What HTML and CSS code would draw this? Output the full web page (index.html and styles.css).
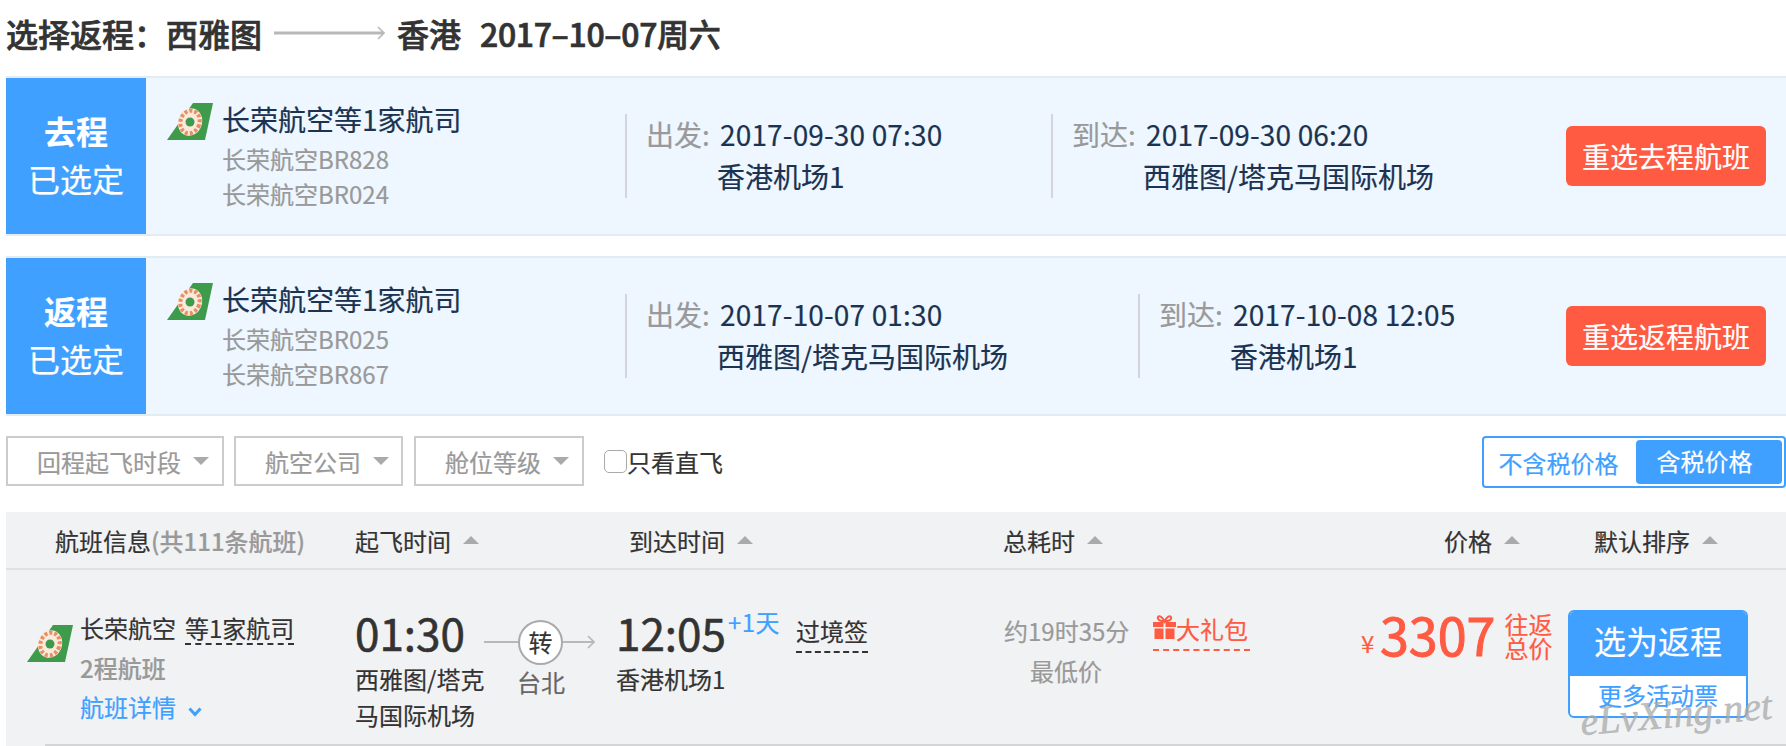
FILE: index.html
```html
<!DOCTYPE html>
<html lang="zh-CN">
<head>
<meta charset="utf-8">
<title>选择返程</title>
<link rel="stylesheet" href="styles.css">
</head>
<body>
<h1 class="title">
  <span>选择返程&#xFF1A;</span>
  <span>西雅图</span>
  <svg class="title-arrow" width="111" height="14" viewBox="0 0 111 14"><path d="M0 7H109" stroke="#b8b8b8" stroke-width="3" fill="none"/><path d="M104 1L110 7L104 13" stroke="#b8b8b8" stroke-width="1.6" fill="none"/></svg>
  <span class="title-to">香港</span>
  <span class="title-date">2017–10–07周六</span>
</h1>

<section class="panel">
  <div class="tag"><strong>去程</strong><span>已选定</span></div>
  <div class="airline">
    <svg class="logo" width="46" height="37" viewBox="0 0 46 37"><polygon points="26,0 46,0 38,37 0,37" fill="#3f9b4c"/><ellipse cx="23" cy="19" rx="12" ry="14" transform="rotate(18 23 19)" fill="#fbe9dc"/><ellipse cx="23" cy="19" rx="9.500" ry="11.500" transform="rotate(18 23 19)" fill="none" stroke="#e88f62" stroke-width="4" stroke-dasharray="3 2"/><circle cx="23" cy="19" r="4.500" fill="#3f9b4c"/></svg>
    <div>
      <div class="airline-name">长荣航空等1家航司</div>
      <div class="flight-no first">长荣航空BR828</div>
      <div class="flight-no">长荣航空BR024</div>
    </div>
  </div>
  <div class="info info-go">
    <span class="info-label">出发:</span><span class="info-time">2017-09-30 07:30</span>
    <span></span><span>香港机场1</span>
  </div>
  <div class="info">
    <span class="info-label">到达:</span><span class="info-time">2017-09-30 06:20</span>
    <span></span><span>西雅图/塔克马国际机场</span>
  </div>
  <button class="reselect">重选去程航班</button>
</section>

<section class="panel panel-return">
  <div class="tag"><strong>返程</strong><span>已选定</span></div>
  <div class="airline">
    <svg class="logo" width="46" height="37" viewBox="0 0 46 37"><polygon points="26,0 46,0 38,37 0,37" fill="#3f9b4c"/><ellipse cx="23" cy="19" rx="12" ry="14" transform="rotate(18 23 19)" fill="#fbe9dc"/><ellipse cx="23" cy="19" rx="9.500" ry="11.500" transform="rotate(18 23 19)" fill="none" stroke="#e88f62" stroke-width="4" stroke-dasharray="3 2"/><circle cx="23" cy="19" r="4.500" fill="#3f9b4c"/></svg>
    <div>
      <div class="airline-name">长荣航空等1家航司</div>
      <div class="flight-no first">长荣航空BR025</div>
      <div class="flight-no">长荣航空BR867</div>
    </div>
  </div>
  <div class="info info-back">
    <span class="info-label">出发:</span><span class="info-time">2017-10-07 01:30</span>
    <span></span><span>西雅图/塔克马国际机场</span>
  </div>
  <div class="info">
    <span class="info-label">到达:</span><span class="info-time">2017-10-08 12:05</span>
    <span></span><span>香港机场1</span>
  </div>
  <button class="reselect">重选返程航班</button>
</section>

<div class="filters">
  <div class="select select-wide">回程起飞时段<i class="caret"></i></div>
  <div class="select select-airline">航空公司<i class="caret"></i></div>
  <div class="select select-airline">舱位等级<i class="caret"></i></div>
  <label class="direct"><input type="checkbox" class="direct-box">只看直飞</label>
  <div class="tax">
    <span class="tax-off">不含税价格</span>
    <span class="tax-on">含税价格</span>
  </div>
</div>

<div class="thead">
  <div>航班信息<span class="thead-count">(共111条航班)</span></div>
  <div class="sort">起飞时间<i class="sort-up"></i></div>
  <div class="sort">到达时间<i class="sort-up"></i></div>
  <div class="sort">总耗时<i class="sort-up"></i></div>
  <div class="sort">价格<i class="sort-up"></i></div>
  <div class="sort">默认排序<i class="sort-up"></i></div>
</div>

<article class="row">
  <div class="col col-airline">
    <svg class="row-logo" width="46" height="37" viewBox="0 0 46 37"><polygon points="26,0 46,0 38,37 0,37" fill="#3f9b4c"/><ellipse cx="23" cy="19" rx="12" ry="14" transform="rotate(18 23 19)" fill="#fbe9dc"/><ellipse cx="23" cy="19" rx="9.500" ry="11.500" transform="rotate(18 23 19)" fill="none" stroke="#e88f62" stroke-width="4" stroke-dasharray="3 2"/><circle cx="23" cy="19" r="4.500" fill="#3f9b4c"/></svg>
    <div>
      <div class="carrier">长荣航空<span class="carrier-more">等1家航司</span></div>
      <div class="legs">2程航班</div>
      <div class="detail">航班详情<svg class="chevron" width="14" height="10" viewBox="0 0 14 10"><path d="M1.500 1.500L7 7.500L12.500 1.500" stroke="#3fa0ff" stroke-width="3" fill="none"/></svg></div>
    </div>
  </div>
  <div class="col col-depart">
    <div class="clock">01:30</div>
    <div class="city">西雅图/塔克<br>马国际机场</div>
  </div>
  <div class="col col-transfer">
    <div class="route">
      <i class="route-line"></i>
      <span class="stop">转</span>
      <svg width="32" height="14" viewBox="0 0 32 14"><path d="M0 7H30" stroke="#b8b8b8" stroke-width="2" fill="none"/><path d="M25 1L31 7L25 13" stroke="#b8b8b8" stroke-width="1.600" fill="none"/></svg>
    </div>
    <div class="stop-city">台北</div>
  </div>
  <div class="col col-arrive">
    <div class="arrive-top"><div class="clock">12:05</div><span class="plus-day">+1天</span></div>
    <div class="city">香港机场1</div>
  </div>
  <div class="col col-visa"><span class="visa">过境签</span></div>
  <div class="col col-duration">
    <div>约19时35分</div>
    <div>最低价</div>
  </div>
  <div class="col col-gift">
    <span class="gift"><svg width="23" height="24" viewBox="0 0 23 24"><path d="M0 7H10.500V12H0ZM12.500 7H23V12H12.500ZM1.500 13.500H10.500V24H1.500ZM12.500 13.500H21.500V24H12.500Z" fill="#ff5a42"/><path d="M11.500 6.500C9 1 6 0.500 5 2C4 4.500 7 6.500 11.500 6.500C16 6.500 19 4.500 18 2C17 0.500 14 1 11.500 6.500Z" fill="none" stroke="#ff5a42" stroke-width="2"/></svg>大礼包</span>
  </div>
  <div class="col col-price">
    <span class="yen">¥</span>
    <span class="amount">3307</span>
    <span class="amount-note">往返<br>总价</span>
  </div>
  <div class="choose">
    <div class="choose-main">选为返程</div>
    <div class="choose-more">更多活动票</div>
  </div>
  <div class="watermark">eLvXing.net</div>
</article>
<div class="row-edge-wrap"><div class="row-edge"></div></div>
</body>
</html>
```
FILE: styles.css
```css
* { box-sizing: border-box; }
html, body { margin: 0; padding: 0; height: 746px; overflow: hidden; }
body {
  background: #fff;
  color: #333;
  font-family: "Noto Sans CJK SC", "Noto Sans", sans-serif;
  font-size: 24px;
  -webkit-text-stroke: 0.2px;
}

.title {
  display: flex;
  align-items: center;
  height: 66px;
  margin: 0 0 10px;
  padding-left: 6px;
  font-size: 32px;
  font-weight: 500;
  color: #333;
  line-height: 40px;
  -webkit-text-stroke: 0.7px;
}
.title-arrow { margin: 0 12px 0 12px; }
.title-date { margin-left: 19px; letter-spacing: -0.35px; }

.panel {
  display: flex;
  height: 160px;
  margin-left: 6px;
  background: #eef7ff;
  border-top: 2px solid #e4ebf3;
  border-bottom: 2px solid #e4ebf3;
  color: #1b3350;
  font-size: 28px;
}
.panel-return { margin-top: 20px; }

.tag {
  display: flex;
  flex-direction: column;
  align-items: center;
  justify-content: center;
  flex: none;
  width: 140px;
  padding-bottom: 4px;
  background: #3fa0ff;
  color: #fff;
  font-size: 32px;
  line-height: 48px;
}
.tag strong { font-weight: 700; }

.airline {
  display: flex;
  flex: none;
  width: 479px;
  padding: 25px 0 0 21px;
}
.logo { flex: none; margin-right: 9px; }
.airline > div { margin-top: -4px; }
.airline-name { line-height: 40px; }
.flight-no { color: #999; font-size: 24px; line-height: 35px; }
.flight-no.first { margin-top: 2px; }

.info {
  display: grid;
  grid-template-columns: 71px auto;
  grid-auto-rows: 42px;
  align-content: start;
  flex: none;
  height: 84px;
  margin-top: 36px;
  padding-left: 19px;
  border-left: 2px solid #d2d6da;
  line-height: 41px;
  white-space: nowrap;
}
.info-go { width: 426px; }
.info-back { width: 513px; }
.info-label { color: #999; }
.info-time { padding-left: 3px; letter-spacing: 0.15px; }

.reselect {
  align-self: center;
  width: 200px;
  height: 60px;
  margin-left: auto;
  margin-right: 20px;
  padding: 0;
  border: 0;
  border-radius: 6px;
  background: #ff5a42;
  color: #fff;
  font: inherit;
}

.filters {
  display: flex;
  align-items: flex-start;
  height: 52px;
  margin: 20px 0 0 6px;
  color: #999;
}
.select {
  display: flex;
  align-items: center;
  height: 50px;
  margin-right: 10px;
  padding-left: 29px;
  border: 2px solid #ccc;
}
.select-wide { width: 218px; }
.select-airline { width: 169px; }
.select-airline + .select-airline { width: 170px; margin-left: 1px; margin-right: 20px; }
.caret {
  width: 0;
  height: 0;
  margin-left: 12px;
  border-top: 8px solid #aaa;
  border-left: 8px solid transparent;
  border-right: 8px solid transparent;
}
.direct {
  display: flex;
  align-items: center;
  height: 50px;
  color: #333;
  white-space: nowrap;
}
.direct-box {
  appearance: none;
  width: 23px;
  height: 23px;
  margin: 0;
  border: 1px solid #aaa;
  border-radius: 5px;
  background: #fff;
}
.tax {
  display: flex;
  align-items: center;
  width: 304px;
  height: 52px;
  margin-left: auto;
  padding: 2px;
  border: 2px solid #3fa0ff;
  border-radius: 4px;
  color: #3fa0ff;
}
.tax-off { width: 150px; padding-right: 5px; text-align: center; }
.tax-on {
  width: 146px;
  height: 44px;
  padding-right: 9px;
  border-radius: 4px;
  background: #3fa0ff;
  color: #fff;
  line-height: 42px;
  text-align: center;
}

.thead {
  display: grid;
  grid-template-columns: 300px 274px 374px 441px 150px 1fr;
  align-items: center;
  height: 58px;
  margin: 24px 0 0 6px;
  padding-left: 49px;
  background: #f1f2f4;
  border-bottom: 2px solid #e0e1e3;
  color: #333;
}
.thead-count { color: #999; font-weight: 500; }
.sort { display: flex; align-items: center; }
.sort-up {
  width: 0;
  height: 0;
  margin-left: 12px;
  border-bottom: 8px solid #aaa;
  border-left: 8px solid transparent;
  border-right: 8px solid transparent;
}

.row {
  position: relative;
  display: flex;
  align-items: flex-start;
  height: 174px;
  margin-left: 6px;
  padding-left: 21px;
  background: #f1f2f4;
  color: #333;
  white-space: nowrap;
}
.col { flex: none; line-height: 40px; }
.col-airline { display: flex; width: 328px; padding-top: 38px; }
.row-logo { flex: none; margin: 17px 7px 0 0; }
.carrier-more {
  display: inline-block;
  height: 37px;
  margin-left: 9px;
  border-bottom: 2px dashed #333;
  line-height: 40px;
}
.carrier { height: 40px; }
.legs { color: #999; font-weight: 500; }
.detail { margin-top: -1px; color: #3fa0ff; }
.chevron { margin-left: 12px; }

.col-depart { width: 129px; padding-top: 36px; }
.clock { font-size: 44px; line-height: 52px; color: #333; -webkit-text-stroke: 0.6px; }
.city { margin-top: 3px; line-height: 36px; }

.col-transfer { width: 132px; padding-top: 50px; }
.route { display: flex; align-items: center; width: 111px; height: 44px; }
.route-line { flex: none; width: 34px; height: 2px; background: #b8b8b8; }
.stop {
  flex: none;
  width: 45px;
  height: 45px;
  border: 2px solid #aaa;
  border-radius: 50%;
  background: #fff;
  line-height: 40px;
  text-align: center;
}
.stop-city { width: 48px; margin-left: 33px; color: #666; line-height: 36px; }

.col-arrive { width: 180px; padding-top: 36px; }
.arrive-top { display: flex; align-items: flex-start; }
.plus-day { margin: -2px 0 0 2px; color: #3fa0ff; line-height: 36px; letter-spacing: 0.5px; }

.col-visa { width: 208px; padding-top: 41px; }
.visa {
  display: inline-block;
  height: 42px;
  border-bottom: 2px dashed #333;
}

.col-duration { width: 149px; padding-top: 41px; }
.col-duration div { width: 124px; color: #999; text-align: center; }

.col-gift { width: 208px; padding-top: 39px; }
.gift {
  display: flex;
  align-items: center;
  width: fit-content;
  height: 42px;
  padding-right: 2px;
  border-bottom: 2px dashed #ff5a42;
  color: #ff5a42;
}
.gift svg { margin-top: -4px; }

.col-price { display: flex; align-items: flex-start; width: 207px; padding-top: 34px; color: #ff5a42; }
.yen { width: 19px; margin-top: 27px; line-height: 24px; }
.amount { font-size: 52px; line-height: 60px; -webkit-text-stroke: 1px; }
.amount-note { margin: 8px 0 0 9px; line-height: 24px; }

.choose {
  flex: none;
  width: 180px;
  height: 108px;
  margin-top: 40px;
  border: 2px solid #3fa0ff;
  border-radius: 6px;
  background: #fff;
  overflow: hidden;
  text-align: center;
}
.choose-main {
  height: 64px;
  background: #3fa0ff;
  color: #fff;
  font-size: 32px;
  line-height: 56px;
}
.choose-more { color: #3fa0ff; line-height: 38px; }

.watermark {
  position: absolute;
  left: 1574px;
  top: 122px;
  color: rgba(170, 170, 170, 0.75);
  font-family: "Liberation Serif", serif;
  font-size: 40px;
  font-style: italic;
  line-height: 44px;
  -webkit-text-stroke: 0.5px;
  transform: rotate(-5deg);
}

.row-edge-wrap { height: 2px; margin-left: 6px; padding-left: 39px; background: #f1f2f4; }
.row-edge { height: 2px; background: #d4d5d7; }
```
